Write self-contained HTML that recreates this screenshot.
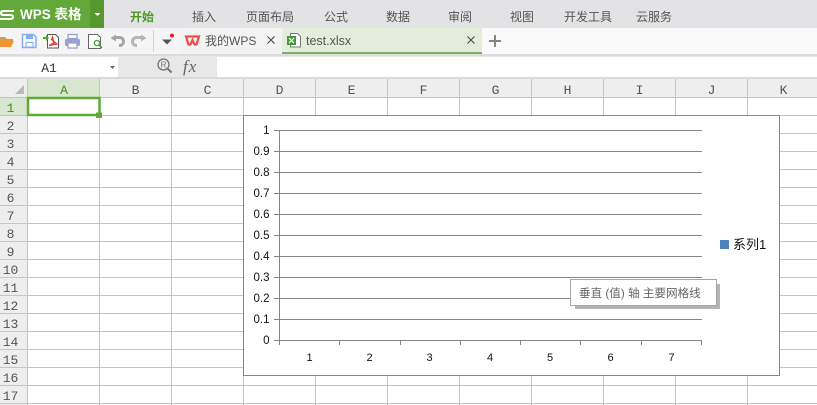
<!DOCTYPE html>
<html lang="zh"><head><meta charset="utf-8"><title>WPS 表格</title>
<style>
html,body{margin:0;padding:0;background:#fff}
svg{display:block}
text{font-family:"Liberation Sans","Noto Sans CJK SC",sans-serif;font-size:12px;fill:#555}
.m{font-family:"Liberation Mono","Noto Sans CJK SC",monospace;font-size:13px;fill:#555;text-anchor:middle}
.c{fill:#111;font-size:11px;text-anchor:middle}
.y{fill:#111;font-size:11.5px;text-anchor:end}
.l line{stroke:#c4c4c4;stroke-width:1}
.g line{stroke:#868686;stroke-width:1}
</style></head><body>
<svg xmlns="http://www.w3.org/2000/svg" width="817" height="405" viewBox="0 0 817 405">
<rect width="817" height="405" fill="#fff"/>
<!-- top band -->
<rect width="817" height="28" fill="#e3e3e5"/>
<rect width="90" height="28" fill="#62a93a"/>
<rect x="90" width="14" height="28" fill="#55982f"/>
<path d="M14 11H3.500Q1 11 1 13T3.500 15H10Q13 15 13 17T10 19H0" fill="none" stroke="#fff" stroke-width="2"/>
<text x="20" y="19" style="font-size:13.500px;font-weight:bold;fill:#fff">WPS 表格</text>
<path d="M94.500 13h6l-3 3z" fill="#fff"/>
<text x="130" y="21" style="fill:#4a9a22;font-weight:bold">开始</text>
<text x="192" y="21">插入</text><text x="246" y="21">页面布局</text><text x="324" y="21">公式</text><text x="386" y="21">数据</text><text x="448" y="21">审阅</text><text x="510" y="21">视图</text><text x="564" y="21">开发工具</text><text x="636" y="21">云服务</text>
<!-- toolbar -->
<rect y="28" width="817" height="26" fill="#fafafa"/>
<rect y="28" width="181" height="26" fill="#f5f5f5"/>
<rect x="181" y="28" width="101" height="26" fill="#f3f3f3"/>
<rect x="282" y="28" width="200" height="26" fill="#e2eedb"/>
<rect x="282" y="52" width="200" height="2" fill="#7fb062"/>
<rect y="54" width="817" height="2" fill="#dcdcdc"/>
<!-- open -->
<path d="M0 37h5l2 2h6v2H4l-4 6z" fill="#d99a4a"/><path d="M0 47l3-6h11l-3 6z" fill="#f5922d"/>
<!-- save -->
<path d="M22.500 34.500h11l2.500 2.500v10.500H22.500z" fill="#f4f8fe" stroke="#85aeee" stroke-width="1.500"/><rect x="26" y="35" width="7" height="4" fill="#85aeee"/><rect x="26" y="42.500" width="7" height="4.500" fill="#fff" stroke="#85aeee"/>
<!-- pdf -->
<path d="M47.500 34.500h8l3 3v10.500h-11z" fill="#fff" stroke="#555"/><path d="M43 37h3v-2l3 3-3 3v-2h-3z" fill="#53a53a"/><path d="M52.500 37l1.500 6-5 2.500 8-1.500-5.500-4.500z" fill="none" stroke="#e33b3b" stroke-width="1.300"/>
<!-- print -->
<rect x="65" y="39" width="15" height="7" rx="1.500" fill="#97a2d2"/><rect x="68" y="34.500" width="9" height="4" fill="#fff" stroke="#97a2d2" stroke-width="1.300"/><rect x="68" y="43" width="9" height="5" fill="#fff" stroke="#97a2d2" stroke-width="1.300"/>
<!-- preview -->
<path d="M88.500 34.500h9l3 3v11h-12z" fill="#fff" stroke="#666"/><circle cx="97" cy="43" r="2.600" fill="none" stroke="#4ea33d" stroke-width="1.400"/><path d="M99 45l3 3" stroke="#4ea33d" stroke-width="1.600"/>
<!-- undo redo -->
<path d="M114 37.500h5a4 4 0 0 1 1 8h-1" fill="none" stroke="#a5a5a5" stroke-width="3"/><path d="M110.500 38l5.500-3.500v7z" fill="#a5a5a5"/>
<path d="M142 37.500h-5a4 4 0 0 0-1 8h1" fill="none" stroke="#b5b5b5" stroke-width="3"/><path d="M146.500 38l-5.500-3.500v7z" fill="#b5b5b5"/>
<rect x="153" y="30" width="1" height="22" fill="#d5d5d5"/>
<path d="M162 39.500h10l-5 5z" fill="#555"/><circle cx="172" cy="35.500" r="2" fill="#ee1c25"/>
<!-- WPS logo -->
<path d="M186 36.500h13l-2.500 8h-2l-2-4.500-2 4.500h-2z" fill="none" stroke="#ee4c50" stroke-width="2.200"/>
<text x="205" y="45">我的WPS</text>
<path d="M267.500 36.500l7 7m0-7l-7 7" stroke="#444" fill="none"/>
<!-- xlsx icon -->
<path d="M290.500 33.500h7l3 3v10.500h-10z" fill="#fff" stroke="#777"/><rect x="287" y="36" width="9" height="9" fill="#3f9a35"/><path d="M289 38l5 5m0-5l-5 5" stroke="#fff" stroke-width="1.300"/>
<text x="306" y="45" style="font-size:12.500px">test.xlsx</text>
<path d="M467.500 36.500l7 7m0-7l-7 7" stroke="#444" fill="none"/>
<path d="M489 41h12M495 35v12" stroke="#858585" stroke-width="2" fill="none"/>
<!-- formula bar -->
<rect y="56" width="817" height="23" fill="#e8e8e8"/>
<rect y="57" width="118" height="20" fill="#fff"/>
<rect x="217" y="57" width="600" height="20" fill="#fff"/>
<rect y="77" width="817" height="2" fill="#dadada"/>
<text x="49" y="72" class="m" style="fill:#333">A1</text>
<path d="M110 66h5l-2.500 3z" fill="#666"/>
<circle cx="163.500" cy="64.500" r="5.500" fill="none" stroke="#777" stroke-width="1.300"/><path d="M167.500 68.500l4 4" stroke="#777" stroke-width="2"/><text x="163.500" y="67.500" style="font-size:8px;text-anchor:middle;fill:#777">R</text>
<text x="183" y="72" style="font-family:'Liberation Serif',serif;font-style:italic;font-size:17px;letter-spacing:1px;fill:#666">fx</text>
<!-- headers -->
<rect y="79" width="817" height="18" fill="#eeeeee"/>
<rect y="97" width="27" height="308" fill="#eeeeee"/>
<rect x="28" y="79" width="72" height="18" fill="#d9e7d1"/>
<rect y="97" width="27" height="18" fill="#d9e7d1"/>
<path d="M24 85v9h-9z" fill="#b9b9b9"/>
<g class="l">
<line x1="0" y1="97.500" x2="817" y2="97.500"/>
<line x1="0" y1="115.500" x2="817" y2="115.500"/><line x1="0" y1="133.500" x2="817" y2="133.500"/><line x1="0" y1="151.500" x2="817" y2="151.500"/><line x1="0" y1="169.500" x2="817" y2="169.500"/><line x1="0" y1="187.500" x2="817" y2="187.500"/><line x1="0" y1="205.500" x2="817" y2="205.500"/><line x1="0" y1="223.500" x2="817" y2="223.500"/><line x1="0" y1="241.500" x2="817" y2="241.500"/><line x1="0" y1="259.500" x2="817" y2="259.500"/><line x1="0" y1="277.500" x2="817" y2="277.500"/><line x1="0" y1="295.500" x2="817" y2="295.500"/><line x1="0" y1="313.500" x2="817" y2="313.500"/><line x1="0" y1="331.500" x2="817" y2="331.500"/><line x1="0" y1="349.500" x2="817" y2="349.500"/><line x1="0" y1="367.500" x2="817" y2="367.500"/><line x1="0" y1="385.500" x2="817" y2="385.500"/><line x1="0" y1="403.500" x2="817" y2="403.500"/>
<line x1="27.500" y1="79" x2="27.500" y2="405"/><line x1="99.500" y1="79" x2="99.500" y2="405"/><line x1="171.500" y1="79" x2="171.500" y2="405"/><line x1="243.500" y1="79" x2="243.500" y2="405"/><line x1="315.500" y1="79" x2="315.500" y2="405"/><line x1="387.500" y1="79" x2="387.500" y2="405"/><line x1="459.500" y1="79" x2="459.500" y2="405"/><line x1="531.500" y1="79" x2="531.500" y2="405"/><line x1="603.500" y1="79" x2="603.500" y2="405"/><line x1="675.500" y1="79" x2="675.500" y2="405"/><line x1="747.500" y1="79" x2="747.500" y2="405"/>
</g>
<text x="64" y="94" class="m" style="fill:#3c8f14">A</text><text x="135.500" y="94" class="m">B</text><text x="207.500" y="94" class="m">C</text><text x="279.500" y="94" class="m">D</text><text x="351.500" y="94" class="m">E</text><text x="423.500" y="94" class="m">F</text><text x="495.500" y="94" class="m">G</text><text x="567.500" y="94" class="m">H</text><text x="639.500" y="94" class="m">I</text><text x="711.500" y="94" class="m">J</text><text x="783.500" y="94" class="m">K</text>
<text x="10.500" y="112" class="m" style="fill:#3c8f14">1</text><text x="10.500" y="130" class="m">2</text><text x="10.500" y="148" class="m">3</text><text x="10.500" y="166" class="m">4</text><text x="10.500" y="184" class="m">5</text><text x="10.500" y="202" class="m">6</text><text x="10.500" y="220" class="m">7</text><text x="10.500" y="238" class="m">8</text><text x="10.500" y="256" class="m">9</text><text x="10.500" y="274" class="m">10</text><text x="10.500" y="292" class="m">11</text><text x="10.500" y="310" class="m">12</text><text x="10.500" y="328" class="m">13</text><text x="10.500" y="346" class="m">14</text><text x="10.500" y="364" class="m">15</text><text x="10.500" y="382" class="m">16</text><text x="10.500" y="400" class="m">17</text>
<!-- selection -->
<rect x="28" y="98" width="71.500" height="17" fill="#fff" stroke="#5fa936" stroke-width="2.500"/>
<rect x="96" y="112.500" width="6" height="5.500" fill="#5fa936"/>
<!-- chart -->
<rect x="243.500" y="115.500" width="536" height="260" fill="#fff" stroke="#888"/>
<g class="g">
<line x1="274" y1="130.500" x2="702" y2="130.500"/><line x1="274" y1="151.500" x2="702" y2="151.500"/><line x1="274" y1="172.500" x2="702" y2="172.500"/><line x1="274" y1="193.500" x2="702" y2="193.500"/><line x1="274" y1="214.500" x2="702" y2="214.500"/><line x1="274" y1="235.500" x2="702" y2="235.500"/><line x1="274" y1="256.500" x2="702" y2="256.500"/><line x1="274" y1="277.500" x2="702" y2="277.500"/><line x1="274" y1="298.500" x2="702" y2="298.500"/><line x1="274" y1="319.500" x2="702" y2="319.500"/><line x1="274" y1="340.500" x2="702" y2="340.500"/>
<line x1="279.500" y1="130" x2="279.500" y2="345"/><line x1="339.500" y1="340" x2="339.500" y2="345"/><line x1="400.500" y1="340" x2="400.500" y2="345"/><line x1="460.500" y1="340" x2="460.500" y2="345"/><line x1="520.500" y1="340" x2="520.500" y2="345"/><line x1="580.500" y1="340" x2="580.500" y2="345"/><line x1="641.500" y1="340" x2="641.500" y2="345"/><line x1="701.500" y1="340" x2="701.500" y2="345"/>
</g>
<text x="269.500" y="134" class="y">1</text><text x="269.500" y="155" class="y">0.9</text><text x="269.500" y="176" class="y">0.8</text><text x="269.500" y="197" class="y">0.7</text><text x="269.500" y="218" class="y">0.6</text><text x="269.500" y="239" class="y">0.5</text><text x="269.500" y="260" class="y">0.4</text><text x="269.500" y="281" class="y">0.3</text><text x="269.500" y="302" class="y">0.2</text><text x="269.500" y="323" class="y">0.1</text><text x="269.500" y="344" class="y">0</text>
<text x="309.500" y="361" class="c">1</text><text x="369.500" y="361" class="c">2</text><text x="429.500" y="361" class="c">3</text><text x="490" y="361" class="c">4</text><text x="550" y="361" class="c">5</text><text x="610.500" y="361" class="c">6</text><text x="671.500" y="361" class="c">7</text>
<rect x="720" y="240" width="9" height="9" fill="#4f81bd"/>
<text x="733" y="249" style="fill:#111;font-size:13px">系列1</text>
<!-- tooltip -->
<rect x="575" y="284" width="145" height="25" fill="#b4b4b4"/>
<rect x="570.500" y="279.500" width="146" height="26" fill="#fff" stroke="#a5a5a5"/>
<text x="579" y="297" style="font-size:11.600px;fill:#666">垂直 (值) 轴 主要网格线</text>
</svg>
</body></html>
